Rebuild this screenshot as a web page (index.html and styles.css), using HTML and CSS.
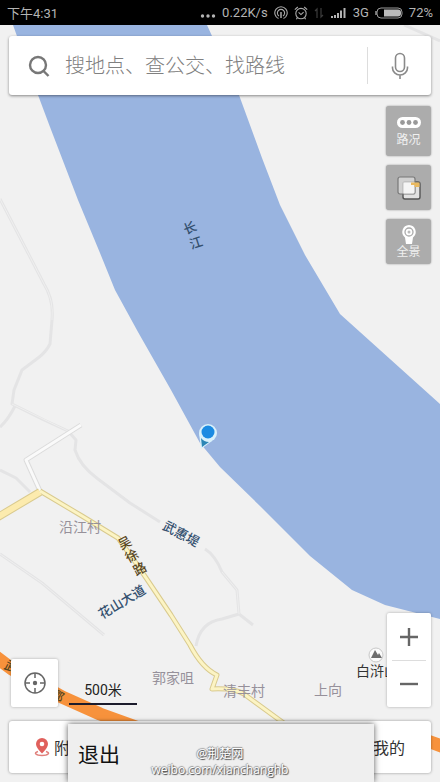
FILE: index.html
```html
<!DOCTYPE html>
<html lang="zh-CN">
<head>
  <meta charset="UTF-8">
  <meta name="viewport" content="width=device-width, initial-scale=1.0">
  <title>地图</title>
  <link rel="stylesheet" href="styles.css">
</head>
<body>
  <div class="screen">
    <header class="status-bar">
      <span class="status-time">下午4:31</span>
      <svg class="status-dots" width="16" height="14" viewBox="0 0 16 14"><circle cx="2.5" cy="10" r="1.7"/><circle cx="8" cy="10" r="1.7"/><circle cx="13.5" cy="10" r="1.7"/></svg>
      <span>0.22K/s</span>
      <svg width="14" height="14" viewBox="0 0 14 14" fill="none" stroke="#aaa" stroke-width="1.1"><path d="M4.5 12.6A6.2 6.2 0 1 1 9.5 12.6M5 10A3.6 3.6 0 1 1 9 10"/><path d="M7 6v6" stroke-width="1.5"/></svg>
      <svg width="14" height="14" viewBox="0 0 14 14" fill="none" stroke="#aaa" stroke-width="1.1"><circle cx="7" cy="7.6" r="5.2"/><path d="M.8 3.6 3.8 1M13.2 3.6 10.2 1M4.6 6.4 7 8.6l2.6-2.4M3.4 11.6l-1 1.6M10.6 11.6l1 1.6"/></svg>
      <svg width="10" height="14" viewBox="0 0 10 14" fill="none" stroke="#3c3c3c" stroke-width="1.2"><path d="M3 12V3L1 5M7 2v9l2-2"/></svg>
      <svg width="17" height="14" viewBox="0 0 17 14" fill="#b4b4b4"><path d="M1 10h2v2H1zM4 9h2v3H4zM7 7h2v5H7zM10 4.5h2V12h-2zM13.5 2h2v10h-2z"/></svg>
      <span>3G</span>
      <svg width="28" height="14" viewBox="0 0 28 14"><rect x="2" y="2" width="25" height="10" rx="4" fill="none" stroke="#999"/><path d="M9 3.500h14a3 3 0 0 1 3 3v1a3 3 0 0 1-3 3H9z" fill="#bbb"/><path d="M1 5v4" stroke="#999" stroke-width="1.500"/></svg>
      <span>72%</span>
    </header>

    <main class="map">
      <svg class="map-canvas" viewBox="0 25 440 757" preserveAspectRatio="xMidYMin slice">
        <!-- river -->
        <path class="river" d="M13 25 38 95 50 127 78 200 100 253 115 290 138 332 171 390 200 443 220 467 260 506 310 556 352 590 385 605 440 619V404L400 368 340 314 305 255 280 205 262 158 239 95 212 36 207 25Z"/>

        <!-- small roads -->
        <g class="lane">
          <path d="M0 199 28 253 44 284Q54 300 52 320L50 344Q46 352 38 358L22 370 14 390 12 404Q24 410 44 420L68 431 76 440 75 450Q80 466 98 479L130 503 160 522M205 549Q215 555 222 572L237 590 239 614 253 625M239 614 222 619Q200 622 196 646M15 406Q8 420 0 427"/>
          <path d="M0 470 16 478 30 492M0 554 42 583 104 635M404 25 440 41"/>
        </g>
        <g class="lane-core"><path d="M0 199 28 253 44 284Q54 300 52 320M0 554 42 583 104 635M12 404 68 431M222 572 237 590 239 614"/></g>
        <path class="street-edge" d="M81 425 26 460 40 491"/>
        <path class="street" d="M81 425 26 460 40 491"/>

        <!-- main roads -->
        <path class="road-edge wide" d="M-2 517 40 492"/>
        <path class="road-edge" d="M40 491 82 516 118 538 136 563 171 615 190 645Q202 668 217 675L212 689Q234 688 244 694L285 724"/>
        <path class="road wide" d="M-2 517 40 492"/>
        <path class="road" d="M40 491 82 516 118 538 136 563 171 615 190 645Q202 668 217 675L212 689Q234 688 244 694L285 724"/>
        <path class="highway" d="M-4 657 12 669 62 697 100 714 150 732Q290 765 425 740L444 747"/>

        <g class="label-road">
          <text transform="translate(181 534) rotate(28)">武惠堤</text>
          <text transform="translate(122 602) rotate(-31)">花山大道</text>
          <text transform="translate(190 228) rotate(-23)">长</text>
          <text transform="translate(196 243) rotate(-18)">江</text>
        </g>
        <g class="label-main">
          <text transform="translate(125 543) rotate(-28)">吴</text>
          <text transform="translate(132 556) rotate(-28)">徐</text>
          <text transform="translate(140 569) rotate(-28)">路</text>
          <text transform="translate(11 667) rotate(28)">武</text>
          <text transform="translate(57 696) rotate(28)">鄂</text>
        </g>
        <g class="label-place">
          <text x="80" y="527">沿江村</text>
          <text x="173" y="678">郭家咀</text>
          <text x="244" y="691">清丰村</text>
          <text x="328" y="690">上向</text>
        </g>
        <circle cx="376" cy="655" r="7" fill="#fafafa" stroke="#c8c8c8"/>
        <path d="M371 658 375 650 378 655 379 653 382 658Z" fill="#6c6c6c"/>
        <text class="label-peak" x="377" y="671">白浒山</text>

        <!-- current position -->
        <path d="M201 449 199 433H206L212 441Z" fill="#d9f1fb"/>
        <circle cx="208" cy="433" r="9" fill="#d9f1fb"/>
        <path d="M202 447 201 438Q204 442 209 442Z" fill="#2b86b5"/>
        <circle cx="208" cy="432" r="6.500" fill="#1b8be2"/>
      </svg>

      <form class="search">
        <svg width="24" height="24" viewBox="0 0 24 24" fill="none" stroke="#777" stroke-width="2.4"><circle cx="11" cy="11" r="8"/><path d="m16.5 17 5 5"/></svg>
        <input class="search-input" type="text" aria-label="搜索" placeholder="搜地点、查公交、找路线">
        <button class="voice" type="button" aria-label="语音">
          <svg width="18" height="28" viewBox="0 0 18 28" fill="none" stroke="#8a8a8a" stroke-width="1.6"><rect x="4.500" y="1.500" width="9" height="18" rx="4.500"/><path d="M1.500 14.500v1.500a7.500 7 0 0 0 15 0v-1.500M9 23v4"/></svg>
        </button>
      </form>

      <div class="layers">
        <button class="layer-btn tall" type="button">
          <svg width="26" height="13" viewBox="0 0 26 13"><rect x="1" y="1" width="24" height="11" rx="5.500" fill="#fff"/><circle cx="6.500" cy="6.500" r="2.400" fill="#999"/><circle cx="13" cy="6.500" r="2.400" fill="#999"/><circle cx="19.500" cy="6.500" r="2.400" fill="#999"/></svg>
          路况
        </button>
        <button class="layer-btn" type="button" aria-label="图层">
          <svg width="26" height="26" viewBox="0 0 26 26"><rect x="7" y="7" width="17" height="17" rx="2" fill="#e2e2e2" stroke="#555" stroke-width="1.4"/><rect x="2" y="2" width="17" height="17" rx="2" fill="#ddd" fill-opacity=".75" stroke="#777" stroke-width="1.2"/><rect x="7.500" y="7.500" width="11" height="11" fill="#f5f5f5"/><path d="M15 7.500h8.500V12H18.500V10H15z" fill="#e9b960"/></svg>
        </button>
        <button class="layer-btn" type="button">
          <svg width="16" height="20" viewBox="0 0 16 20"><path d="M8 0a7 7 0 0 1 4 12.500L11 19H5L4 12.500A7 7 0 0 1 8 0z" fill="#fff"/><circle cx="8" cy="7" r="4" fill="none" stroke="#aaa" stroke-width="1.300"/><circle cx="8" cy="7" r="1.500" fill="#bbb"/></svg>
          全景
        </button>
      </div>

      <div class="controls">
        <button class="locate" type="button" aria-label="定位">
          <svg width="24" height="24" viewBox="0 0 24 24" fill="none" stroke="#666" stroke-width="1.5"><circle cx="12" cy="12" r="10"/><path d="M12 2v5M12 17v5M2 12h5M17 12h5"/><circle cx="12" cy="12" r="2.200" fill="#666" stroke="none"/></svg>
        </button>
        <div class="scale">500米</div>
        <div class="zoom">
          <button type="button" aria-label="放大"><svg width="18" height="18" viewBox="0 0 18 18" stroke="#666" stroke-width="2.4"><path d="M0 9h18M9 0v18"/></svg></button>
          <button type="button" aria-label="缩小"><svg width="18" height="18" viewBox="0 0 18 18" stroke="#666" stroke-width="2.4"><path d="M0 9h18"/></svg></button>
        </div>
      </div>

      <nav class="tabs">
        <button type="button">
          <svg width="16" height="20" viewBox="0 0 16 20"><path d="M8 1a6 6 0 0 1 6 6c0 4-6 9.500-6 9.500S2 11 2 7a6 6 0 0 1 6-6z" fill="#e0605c"/><circle cx="8" cy="7" r="2.300" fill="#fff"/><path d="M4 14.500c-5 1.500-2 4 4 4s9-2.500 4-4" fill="none" stroke="#e0807c" stroke-width="1.500"/></svg>
          附近
        </button>
        <button type="button">我的</button>
      </nav>

      <div class="exit-menu">
        <button type="button">退出</button>
      </div>
      <div class="watermark">
        <span>@荆楚网</span>
        <span>weibo.com/xianchanghb</span>
      </div>
    </main>
  </div>
</body>
</html>
```

FILE: styles.css
```css
* {
  box-sizing: border-box;
}
body {
  margin: 0;
  font-family: Roboto, "Noto Sans CJK SC", sans-serif;
  color: #333;
}
button {
  margin: 0;
  padding: 0;
  border: none;
  background: none;
  font-family: inherit;
  color: inherit;
  cursor: pointer;
}
svg {
  flex: none;
}
.screen {
  display: flex;
  flex-direction: column;
  min-height: 100vh;
}

.status-bar {
  display: flex;
  align-items: center;
  gap: 6px;
  height: 25px;
  padding: 0 7px;
  background: #000;
  color: #b4b4b4;
  font-size: 13px;
}
.status-time {
  margin-right: auto;
}
.status-dots {
  fill: #b4b4b4;
}

.map {
  position: relative;
  flex: 1;
  display: flex;
  flex-direction: column;
  padding: 11px 9px 9px;
  background: #f1f1f1;
  overflow: hidden;
}
.map-canvas {
  position: absolute;
  top: 0;
  left: 0;
  width: 100%;
  height: 100%;
}
.map-canvas path {
  stroke-linejoin: round;
}
.map-canvas text {
  text-anchor: middle;
  dominant-baseline: central;
  font-size: 14px;
}
.river {
  fill: #99b4e0;
}
.lane,
.lane-core,
.street,
.street-edge,
.road,
.road-edge,
.highway {
  fill: none;
}
.lane {
  stroke: #e4e4e5;
  stroke-width: 3px;
}
.lane-core {
  stroke: #efefef;
  stroke-width: 1px;
}
.street-edge {
  stroke: #dcdcdc;
  stroke-width: 5px;
}
.street {
  stroke: #fafafa;
  stroke-width: 3px;
}
.road-edge {
  stroke: #d9ca8e;
  stroke-width: 5px;
}
.road {
  stroke: #fcf4c4;
  stroke-width: 3px;
}
.road-edge.wide {
  stroke-width: 8px;
}
.road.wide {
  stroke: #fcebae;
  stroke-width: 6px;
}
.highway {
  stroke: #f7923c;
  stroke-width: 13px;
}
.label-road {
  fill: #34506f;
}
.label-main {
  fill: #59471f;
}
.map-canvas .label-road text,
.map-canvas .label-main text {
  font-size: 13px;
  font-weight: 500;
}
.label-place {
  fill: #96909a;
}
.label-peak {
  fill: #333;
}

.search,
.layers,
.controls,
.tabs {
  position: relative;
}
.search {
  display: flex;
  align-items: center;
  height: 59px;
  padding-left: 18px;
  background: #fff;
  border-radius: 3px;
  box-shadow: 0 1px 3px rgba(0, 0, 0, 0.45);
}
.search-input {
  flex: 1;
  min-width: 0;
  padding: 0 0 0 14px;
  border: none;
  outline: none;
  background: none;
  font-family: inherit;
  font-size: 20px;
  font-weight: 300;
}
.search-input::placeholder {
  color: #808080;
}
.voice {
  display: flex;
  align-items: center;
  justify-content: center;
  width: 64px;
  height: 37px;
  border-left: 1px solid #ddd;
}

.layers {
  display: flex;
  flex-direction: column;
  align-items: flex-end;
  gap: 9px;
  margin-top: 11px;
}
.layer-btn {
  display: flex;
  flex-direction: column;
  align-items: center;
  justify-content: center;
  width: 45px;
  height: 45px;
  border-radius: 3px;
  background: #acacac;
  box-shadow: 0 0 2px rgba(0, 0, 0, 0.4);
  color: #f0f0f0;
  font-size: 12px;
  line-height: 14px;
}
.layer-btn.tall {
  gap: 4px;
  height: 50px;
}

.controls {
  display: flex;
  align-items: flex-end;
  gap: 11px;
  margin-top: auto;
  padding-left: 2px;
}
.locate {
  display: flex;
  align-items: center;
  justify-content: center;
  width: 47px;
  height: 48px;
  background: #fff;
  border-radius: 2px;
  box-shadow: 0 0 3px rgba(0, 0, 0, 0.3);
}
.scale {
  width: 68px;
  margin-bottom: 2px;
  border-bottom: 2px solid #1c1c2c;
  color: #222;
  font-size: 14px;
  line-height: 26px;
  text-align: center;
}
.zoom {
  display: flex;
  flex-direction: column;
  width: 44px;
  margin-left: auto;
  padding: 0 5px;
  background: #fff;
  border-radius: 2px;
  box-shadow: 0 0 3px rgba(0, 0, 0, 0.3);
}
.zoom button {
  display: flex;
  align-items: center;
  justify-content: center;
  height: 47px;
}
.zoom button + button {
  border-top: 1px solid #ddd;
}

.tabs {
  display: flex;
  align-items: center;
  justify-content: space-between;
  height: 52px;
  margin-top: 14px;
  padding: 0 26px 0 25px;
  background: #fff;
  border-radius: 3px;
  box-shadow: 0 0 3px rgba(0, 0, 0, 0.4);
}
.tabs button {
  display: flex;
  align-items: center;
  gap: 4px;
  font-size: 16px;
}

/* popup menu over the bottom tabs */
.exit-menu {
  position: absolute;
  right: 15%;
  bottom: 0;
  left: 68px;
  padding: 0 10px;
  background: #efefef;
  box-shadow: 0 0 6px rgba(0, 0, 0, 0.65);
}
.exit-menu button {
  display: block;
  height: 58px;
  color: #111;
  font-size: 21px;
}
.watermark {
  position: absolute;
  right: 0;
  bottom: 4px;
  left: 0;
  display: flex;
  flex-direction: column;
  align-items: center;
  color: #fff;
  font-family: "Open Sans", "Noto Sans CJK SC", sans-serif;
  font-size: 12px;
  line-height: 16px;
  text-shadow: 1px 1px 1px #444, -1px 0 1px #999, 0 -1px 1px #999;
  pointer-events: none;
}
```
